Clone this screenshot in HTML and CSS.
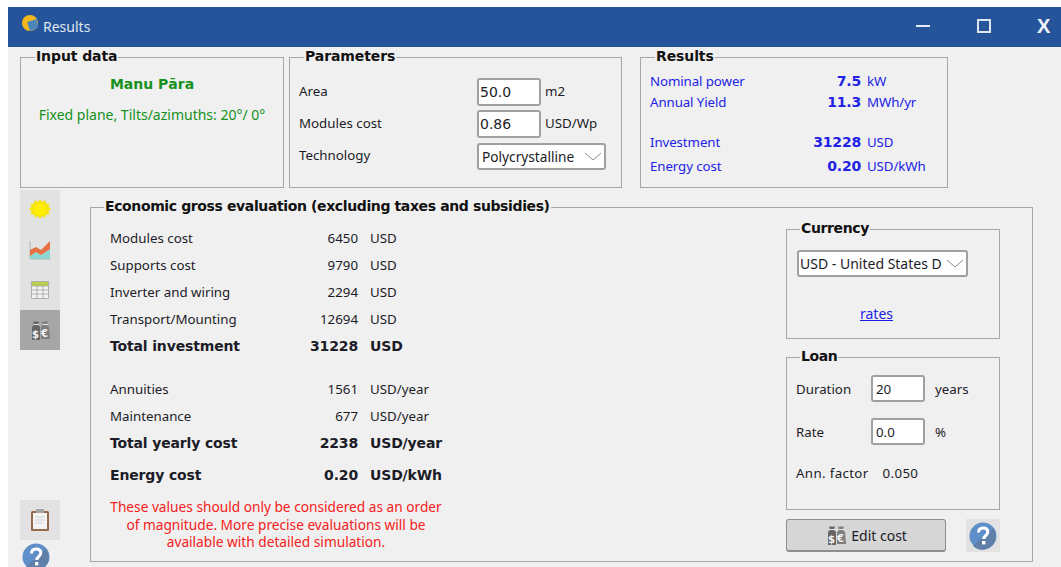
FILE: index.html
```html
<!DOCTYPE html>
<html lang="en">
<head>
<meta charset="utf-8">
<title>Results</title>
<link rel="stylesheet" href="styles.css">
</head>
<body>
<svg class="defs" width="0" height="0" aria-hidden="true">
  <symbol id="i-bags" viewBox="0 0 22 22">
    <path d="M3 8l2-2-1-4 2 1 1-1 1 1 2-1-1 4 2 2v13H3z" fill="#666"/>
    <path d="M12 8l2-2-1-4 2 1 1-1 1 1 2-1-1 4 2 2 1 12H12z" fill="#7e7e7e"/>
    <path d="M5 5.500h5M14 5.500h5" stroke="#e8e8e8"/>
  </symbol>
  <symbol id="i-help" viewBox="0 0 28 28">
    <circle cx="14" cy="14" r="13.5" fill="#5f8fc8"/>
    <path d="M4 24L24 6a13.500 13.500 0 0 1-20 18z" fill="#5f7fa8"/>
    <path d="M9.500 10.500c0-3 2-4.500 4.700-4.500 2.800 0 4.600 1.600 4.600 4 0 3.500-4 3.500-4 7" fill="none" stroke="#fff" stroke-width="3"/>
    <rect x="13" y="19" width="3.400" height="3.400" fill="#fff"/>
  </symbol>
</svg>
<div class="window">
  <header class="titlebar">
    <svg class="app-icon" width="18" height="18" viewBox="0 0 18 18">
      <circle cx="9" cy="8" r="8" fill="#f5b81c"/>
      <path d="M6 7l10-3 1 9-8 3z" fill="#4d86b8"/>
    </svg>
    <span class="title">Results</span>
    <div class="controls">
      <span class="ctl-min"></span>
      <span class="ctl-max"></span>
      <span class="ctl-close">X</span>
    </div>
  </header>

  <div class="top">
    <fieldset class="group input-data">
      <legend>Input data</legend>
      <div class="site">Manu Pāra</div>
      <div class="plane">Fixed plane, Tilts/azimuths: 20°/ 0°</div>
    </fieldset>

    <fieldset class="group params">
      <legend>Parameters</legend>
      <div class="param-grid">
        <span class="lbl">Area</span><span class="field">50.0</span><span class="lbl">m2</span>
        <span class="lbl">Modules cost</span><span class="field">0.86</span><span class="lbl">USD/Wp</span>
        <span class="lbl">Technology</span>
        <span class="select tech">Polycrystalline
          <svg class="chev" width="18" height="9" viewBox="0 0 18 9"><path d="M1 1l8 7 8-7" fill="none" stroke="#8a8a8a"/></svg>
        </span>
      </div>
    </fieldset>

    <fieldset class="group results">
      <legend>Results</legend>
      <div class="res-grid">
        <span>Nominal power</span><b>7.5</b><span>kW</span>
        <span>Annual Yield</span><b>11.3</b><span>MWh/yr</span>
        <span class="gap-row"></span>
        <span>Investment</span><b>31228</b><span>USD</span>
        <span>Energy cost</span><b>0.20</b><span>USD/kWh</span>
      </div>
    </fieldset>
  </div>

  <div class="lower">
    <aside class="sidebar">
      <div class="tabs">
        <div class="tab">
          <svg width="22" height="22" viewBox="0 0 22 22">
            <path d="M11 0l2 3 3-2 1 3.500 3.500 0-1 3.500 3 2-3 2 1 3.500-3.500 0-1 3.500-3-2-2 3-2-3-3 2-1-3.500-3.500 0 1-3.500-3-2 3-2-1-3.500 3.500 0 1-3.500 3 2z" fill="#f7e30e"/>
            <circle cx="11" cy="10.500" r="6.500" fill="#ffee00"/>
          </svg>
        </div>
        <div class="tab">
          <svg width="22" height="20" viewBox="0 0 22 20">
            <path d="M1 1v18h21" fill="none" stroke="#b4b4b4"/>
            <path d="M1 16l6-4 5 3 9-6v10H1z" fill="#8ad8d0"/>
            <path d="M1 10l6-3 5 3 9-9v8l-9 6-5-3-6 4z" fill="#e66f44"/>
          </svg>
        </div>
        <div class="tab">
          <svg width="18" height="18" viewBox="0 0 18 18">
            <rect width="18" height="18" fill="#b0b0b0"/>
            <rect x="1" y="1" width="16" height="3.500" fill="#b6cf4a"/>
            <path d="M1 5.500h4.500v3H1zM6.500 5.500h5v3h-5zM12.500 5.500H17v3h-4.500zM1 9.500h4.500v3H1zM6.500 9.500h5v3h-5zM12.500 9.500H17v3h-4.500zM1 13.500h4.500V17H1zM6.500 13.500h5V17h-5zM12.500 13.500H17V17h-4.500z" fill="#f2f2f2"/>
          </svg>
        </div>
        <div class="tab active">
          <svg width="22" height="22" viewBox="0 0 22 22"><use href="#i-bags"/><text x="3" y="18.500" class="bag-text">$</text><text x="12" y="18" class="bag-text">€</text></svg>
        </div>
      </div>
      <div class="side-bottom">
        <div class="tab clip">
          <svg width="18" height="22" viewBox="0 0 18 22">
            <rect y="2" width="18" height="20" rx="1.500" fill="#96684f"/>
            <rect x="2" y="4" width="14" height="16" fill="#f4f4f4"/>
            <rect x="5" y="0" width="8" height="4" fill="#a4a4a4"/>
            <path d="M4 8h10M4 11h10M4 14h8" stroke="#cfcfcf"/>
          </svg>
        </div>
        <svg class="side-help" width="28" height="28"><use href="#i-help"/></svg>
      </div>
    </aside>

    <fieldset class="group eval">
      <legend>Economic gross evaluation (excluding taxes and subsidies)</legend>
      <div class="eval-body">
        <div class="cost-col">
          <div class="cost-row"><span>Modules cost</span><span class="num">6450</span><span>USD</span></div>
          <div class="cost-row"><span>Supports cost</span><span class="num">9790</span><span>USD</span></div>
          <div class="cost-row"><span>Inverter and wiring</span><span class="num">2294</span><span>USD</span></div>
          <div class="cost-row"><span>Transport/Mounting</span><span class="num">12694</span><span>USD</span></div>
          <div class="cost-row total"><span>Total investment</span><span class="num">31228</span><span>USD</span></div>
          <div class="cost-row after-gap"><span>Annuities</span><span class="num">1561</span><span>USD/year</span></div>
          <div class="cost-row"><span>Maintenance</span><span class="num">677</span><span>USD/year</span></div>
          <div class="cost-row total"><span>Total yearly cost</span><span class="num">2238</span><span>USD/year</span></div>
          <div class="cost-row total energy"><span>Energy cost</span><span class="num">0.20</span><span>USD/kWh</span></div>
          <p class="warning">These values should only be considered as an order<br>of magnitude. More precise evaluations will be<br>available with detailed simulation.</p>
        </div>
        <div class="side-col">
          <fieldset class="group currency">
            <legend>Currency</legend>
            <span class="select cur">USD - United States D
              <svg class="chev" width="18" height="9" viewBox="0 0 18 9"><path d="M1 1l8 7 8-7" fill="none" stroke="#8a8a8a"/></svg>
            </span>
            <a class="rates" href="#">rates</a>
          </fieldset>
          <fieldset class="group loan">
            <legend>Loan</legend>
            <div class="loan-row"><span class="loan-label">Duration</span><span class="field small">20</span><span>years</span></div>
            <div class="loan-row"><span class="loan-label">Rate</span><span class="field small">0.0</span><span>%</span></div>
            <div class="factor"><span>Ann. factor</span><span>0.050</span></div>
          </fieldset>
          <div class="actions">
            <button class="edit" type="button"><svg width="22" height="22" viewBox="0 0 22 22"><use href="#i-bags"/><text x="3" y="18.500" class="bag-text">$</text><text x="12" y="18" class="bag-text">€</text></svg>Edit cost</button>
            <div class="help-box"><svg width="28" height="28"><use href="#i-help"/></svg></div>
          </div>
        </div>
      </div>
    </fieldset>
  </div>
</div>
</body>
</html>
```

FILE: styles.css
```css
* { box-sizing: border-box; }

html, body { height: 100%; }

body {
  margin: 0;
  padding: 7px 0 0 8px;
  background: #fff;
  font-family: "Noto Sans", "Open Sans", sans-serif;
  font-size: 13.3px;
  color: #1c1c28;
  overflow: hidden;
}

.defs { position: absolute; }

.bag-text { font: bold 10px "DejaVu Sans", sans-serif; fill: #f6f6f6; }

.window {
  height: 560px;
  background: #f0f0f0;
  overflow: hidden;
}

/* Title bar */
.titlebar {
  height: 40px;
  background: #25549a;
  display: flex;
  align-items: center;
  padding: 0 0 2px 13px;
  color: #dfe6f0;
}
.app-icon { margin-right: 4px; margin-top: -4px; }
.title { font-size: 14px; }
.controls { margin-left: auto; display: flex; align-items: center; }
.ctl-min { width: 14px; height: 2px; background: #e6ecf5; margin-right: 47px; }
.ctl-max { width: 14px; height: 14px; border: 2px solid #dfe6f0; margin-right: 46px; }
.ctl-close { font: bold 20px "Liberation Sans", sans-serif; color: #f4f6fa; width: 24px; }

/* Group boxes */
.group {
  margin: 0;
  padding: 0;
  min-width: 0;
  border: 1.500px solid #a6a6a6;
}
.group legend {
  margin-left: 14px;
  padding: 0 1px 1px;
  font: bold 14px/15px "DejaVu Sans", sans-serif;
  letter-spacing: -0.1px;
  color: #111;
}

.top {
  display: flex;
  padding: 2px 0 0 12px;
  align-items: flex-start;
}
.input-data { width: 264px; height: 139px; color: #16911c; }
.params { width: 333px; height: 139px; margin-left: 5px; }
.results { width: 308px; height: 139px; margin-left: 18px; }

.site { font: bold 14px/18px "DejaVu Sans", sans-serif; margin-top: 10px; text-align: center; }
.plane { margin-top: 13px; line-height: 18px; font-size: 14px; text-align: center; }

.param-grid {
  display: grid;
  grid-template-columns: 174px 64px auto;
  grid-auto-rows: 32px;
  column-gap: 4px;
  align-items: center;
  padding: 11px 0 0 9px;
}
.lbl { margin-top: -2px; }

.field {
  display: block;
  height: 28px;
  background: #fff;
  border: 2px solid #a0a0a0;
  border-radius: 3px;
  padding: 0 1px;
  line-height: 24px;
  font-family: "DejaVu Sans", sans-serif;
  font-size: 14px;
}
.field.small { width: 54px; height: 27px; padding: 0 3px; font-family: "Noto Sans", sans-serif; font-size: 13.3px; }

.select {
  display: flex;
  align-items: center;
  justify-content: space-between;
  height: 27px;
  background: #fff;
  border: 2px solid #a0a0a0;
  border-radius: 3px;
  padding: 0 2px 0 1px;
  white-space: nowrap;
  font-size: 14px;
}
.chev { flex: none; }
.tech { width: 129px; font-size: 13.7px; padding-left: 3px; }
.cur { width: 171px; margin: 13px 0 0 10px; }

.res-grid {
  display: grid;
  grid-template-columns: 157px 48px auto;
  column-gap: 6px;
  padding: 6px 0 0 9px;
  color: #2222e6;
  line-height: 21px;
  letter-spacing: -0.1px;
}
.res-grid b { font-family: "DejaVu Sans", sans-serif; text-align: right; letter-spacing: -0.2px; font-size: 14px; }
.gap-row { grid-column: 1 / -1; height: 19px; }
.res-grid > :nth-child(n+8) { margin-bottom: 3px; }

/* Lower area */
.lower { display: flex; padding: 2px 0 0 12px; }

.sidebar {
  width: 40px;
  height: 373px;
  display: flex;
  flex-direction: column;
  justify-content: space-between;
  flex: none;
}
.tabs { background: #e2e2e2; }
.tab {
  height: 40px;
  display: flex;
  align-items: center;
  justify-content: center;
}
.tab.active { background: #a6a6a6; }
.side-bottom { display: flex; flex-direction: column; align-items: flex-start; }
.clip { background: #e2e2e2; width: 40px; }
.side-help { margin: 3px 0 -8px 2px; }

.eval { width: 943px; height: 363px; margin: 9px 0 0 30px; }
.eval legend { margin-left: 13px; letter-spacing: -0.38px; }
.eval-body { display: flex; }

.cost-col { width: 695px; padding: 10px 0 0 19px; }
.cost-row {
  display: grid;
  grid-template-columns: 178px 58px auto;
  column-gap: 12px;
  height: 27px;
  line-height: 27px;
  white-space: nowrap;
}
.cost-row .num { text-align: right; }
.cost-row.total { font: bold 14px/27px "DejaVu Sans", sans-serif; letter-spacing: -0.15px; }
.after-gap { margin-top: 16px; }
.energy { margin-top: 5px; }

.warning {
  margin: 9px 0 0;
  width: 332px;
  text-align: center;
  color: #f52020;
  font-size: 13.7px;
  line-height: 17.5px;
  white-space: nowrap;
}

.side-col { width: 214px; }
.currency { height: 118px; margin-top: 6px; display: block; }
.rates { display: block; margin: 27px 0 0 73px; color: #1a1ae6; width: 36px; font-size: 14px; }

.loan { height: 161px; margin-top: 10px; }
.loan-row { display: flex; align-items: center; height: 27px; margin-top: 10px; }
.loan-row + .loan-row { margin-top: 16px; }
.loan-row:first-of-type { margin-top: 10px; }
.loan-label { width: 84px; padding-left: 9px; }
.loan-row .field { margin-right: 10px; }
.factor { display: flex; gap: 14px; padding: 19px 0 0 9px; letter-spacing: 0.35px; }

.actions { display: flex; align-items: center; margin-top: 9px; }
.edit {
  width: 161px;
  height: 33px;
  display: flex;
  align-items: center;
  justify-content: center;
  gap: 4px;
  padding: 0;
  background: #d6d6d6;
  border: 1.500px solid #8e8e8e;
  border-bottom-width: 2px;
  border-radius: 3px;
  font: 14px "Noto Sans", sans-serif;
  color: #1c1c28;
}
.help-box {
  width: 34px;
  height: 33px;
  margin-left: 20px;
  background: #e2e2e2;
  display: flex;
  align-items: center;
  justify-content: center;
}
```
